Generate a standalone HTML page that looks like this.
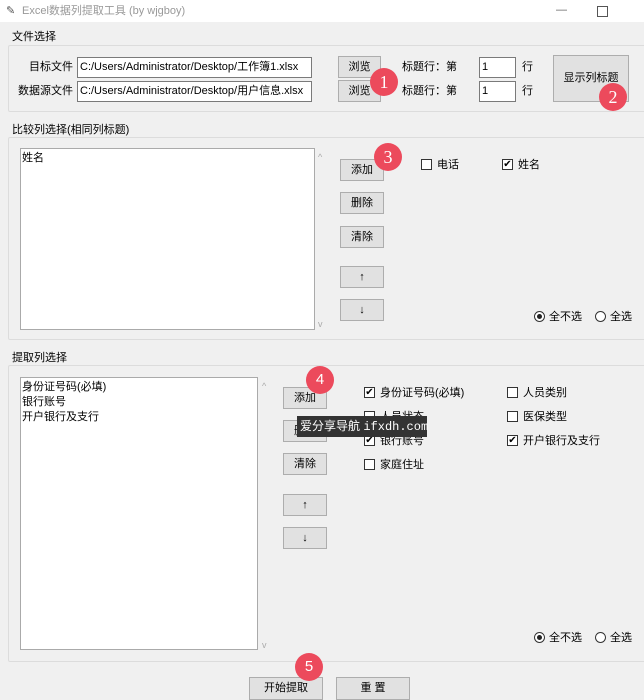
<!DOCTYPE html>
<html><head><meta charset="utf-8"><style>
body{margin:0;width:644px;height:700px;background:#f0f0f0;position:relative;overflow:hidden;font-family:"Liberation Sans","Noto Sans CJK SC",sans-serif;font-size:11px;color:#000}
.a{position:absolute}
.t{position:absolute;white-space:nowrap;line-height:14px}
.btn{position:absolute;background:#e1e1e1;border:1px solid #adadad;box-sizing:border-box;text-align:center;font-size:11px;white-space:nowrap}
.inp{position:absolute;background:#fff;border:1px solid #7a7a7a;box-sizing:border-box;padding-left:2px;font-size:11px;white-space:nowrap;overflow:hidden}
.grp{position:absolute;border:1px solid #dcdcdc;border-radius:2px;box-sizing:border-box}
.gl{position:absolute;background:#f0f0f0;padding:0 2px;line-height:14px}
.cb{position:absolute;width:11px;height:11px;border:1px solid #333;background:#fff;box-sizing:border-box;font-size:10px;line-height:9px;text-align:center}
.rd{position:absolute;width:11px;height:11px;border:1px solid #333;border-radius:50%;background:#fff;box-sizing:border-box}
.dot{position:absolute;left:2px;top:2px;width:5px;height:5px;border-radius:50%;background:#222}
.red{position:absolute;width:28px;height:28px;border-radius:50%;background:#ec4a5c;color:#fff;text-align:center;line-height:28px;font-family:"Liberation Serif",serif;font-size:18px}
.lb{position:absolute;background:#fff;border:1px solid #aaa;box-sizing:border-box}
</style></head><body>
<div class="a" style="left:0;top:0;width:644px;height:22px;background:#fff"></div>
<div class="t" style="left:6px;top:4px;color:#555">✎</div>
<div class="t" style="left:22px;top:4px;color:#999">Excel数据列提取工具 (by wjgboy)</div>
<div class="t" style="left:556px;top:3px;color:#666">—</div>
<div class="a" style="left:597px;top:6px;width:9px;height:9px;border:1px solid #555"></div>

<div class="grp" style="left:8px;top:45px;width:640px;height:67px"></div>
<div class="gl" style="left:10px;top:30px">文件选择</div>
<div class="t" style="left:29px;top:60px">目标文件</div>
<div class="t" style="left:18px;top:84px">数据源文件</div>
<div class="inp" style="left:77px;top:57px;width:235px;height:21px;line-height:19px">C:/Users/Administrator/Desktop/工作簿1.xlsx</div>
<div class="inp" style="left:77px;top:81px;width:235px;height:21px;line-height:19px">C:/Users/Administrator/Desktop/用户信息.xlsx</div>
<div class="btn" style="left:338px;top:56px;width:43px;height:22px;line-height:20px">浏览</div>
<div class="btn" style="left:338px;top:80px;width:43px;height:22px;line-height:20px">浏览</div>
<div class="t" style="left:402px;top:60px">标题行：第</div>
<div class="t" style="left:402px;top:84px">标题行：第</div>
<div class="inp" style="left:479px;top:57px;width:37px;height:21px;line-height:19px">1</div>
<div class="inp" style="left:479px;top:81px;width:37px;height:21px;line-height:19px">1</div>
<div class="t" style="left:522px;top:60px">行</div>
<div class="t" style="left:522px;top:84px">行</div>
<div class="btn" style="left:553px;top:55px;width:76px;height:47px;line-height:45px">显示列标题</div>

<div class="grp" style="left:8px;top:137px;width:640px;height:203px"></div>
<div class="gl" style="left:10px;top:123px">比较列选择(相同列标题)</div>
<div class="lb" style="left:20px;top:148px;width:295px;height:182px"><div class="t" style="left:1px;top:2px">姓名</div></div>
<div class="t" style="left:318px;top:150px;color:#aaa;font-size:9px">^</div>
<div class="t" style="left:318px;top:317px;color:#aaa;font-size:9px">v</div>
<div class="btn" style="left:340px;top:159px;width:44px;height:22px;line-height:20px">添加</div>
<div class="btn" style="left:340px;top:192px;width:44px;height:22px;line-height:20px">删除</div>
<div class="btn" style="left:340px;top:226px;width:44px;height:22px;line-height:20px">清除</div>
<div class="btn" style="left:340px;top:266px;width:44px;height:22px;line-height:20px">↑</div>
<div class="btn" style="left:340px;top:299px;width:44px;height:22px;line-height:20px">↓</div>
<div class="cb" style="left:421px;top:159px"></div><div class="t" style="left:437px;top:158px">电话</div>
<div class="cb" style="left:502px;top:159px">✔</div><div class="t" style="left:518px;top:158px">姓名</div>
<div class="rd" style="left:534px;top:311px"><div class="dot"></div></div><div class="t" style="left:549px;top:310px">全不选</div>
<div class="rd" style="left:595px;top:311px"></div><div class="t" style="left:610px;top:310px">全选</div>

<div class="grp" style="left:8px;top:365px;width:640px;height:297px"></div>
<div class="gl" style="left:10px;top:351px">提取列选择</div>
<div class="lb" style="left:20px;top:377px;width:238px;height:273px">
<div class="t" style="left:1px;top:2px">身份证号码(必填)</div><div class="t" style="left:1px;top:17px">银行账号</div><div class="t" style="left:1px;top:32px">开户银行及支行</div></div>
<div class="t" style="left:262px;top:379px;color:#aaa;font-size:9px">^</div>
<div class="t" style="left:262px;top:638px;color:#aaa;font-size:9px">v</div>
<div class="btn" style="left:283px;top:387px;width:44px;height:22px;line-height:20px">添加</div>
<div class="btn" style="left:283px;top:420px;width:44px;height:22px;line-height:20px">删除</div>
<div class="btn" style="left:283px;top:453px;width:44px;height:22px;line-height:20px">清除</div>
<div class="btn" style="left:283px;top:494px;width:44px;height:22px;line-height:20px">↑</div>
<div class="btn" style="left:283px;top:527px;width:44px;height:22px;line-height:20px">↓</div>
<div class="cb" style="left:364px;top:387px">✔</div><div class="t" style="left:380px;top:386px">身份证号码(必填)</div>
<div class="cb" style="left:364px;top:411px"></div><div class="t" style="left:380px;top:410px">人员状态</div>
<div class="cb" style="left:364px;top:435px">✔</div><div class="t" style="left:380px;top:434px">银行账号</div>
<div class="cb" style="left:364px;top:459px"></div><div class="t" style="left:380px;top:458px">家庭住址</div>
<div class="cb" style="left:507px;top:387px"></div><div class="t" style="left:523px;top:386px">人员类别</div>
<div class="cb" style="left:507px;top:411px"></div><div class="t" style="left:523px;top:410px">医保类型</div>
<div class="cb" style="left:507px;top:435px">✔</div><div class="t" style="left:523px;top:434px">开户银行及支行</div>
<div class="rd" style="left:534px;top:632px"><div class="dot"></div></div><div class="t" style="left:549px;top:631px">全不选</div>
<div class="rd" style="left:595px;top:632px"></div><div class="t" style="left:610px;top:631px">全选</div>

<div class="btn" style="left:249px;top:677px;width:74px;height:23px;line-height:21px">开始提取</div>
<div class="btn" style="left:336px;top:677px;width:74px;height:23px;line-height:21px">重 置</div>

<div class="a" style="left:297px;top:416px;width:130px;height:21px;background:#333"></div>
<div class="t" style="left:300px;top:419px;color:#fff;font-size:12px">爱分享导航 <span style="font-family:'Liberation Mono',monospace">ifxdh.com</span></div>

<div class="red" style="left:370px;top:68px">1</div>
<div class="red" style="left:599px;top:83px">2</div>
<div class="red" style="left:374px;top:143px">3</div>
<div class="red" style="left:306px;top:366px;font-family:'Liberation Sans',sans-serif;font-size:15px">4</div>
<div class="red" style="left:295px;top:653px;font-family:'Liberation Sans',sans-serif;font-size:15px">5</div>
</body></html>
